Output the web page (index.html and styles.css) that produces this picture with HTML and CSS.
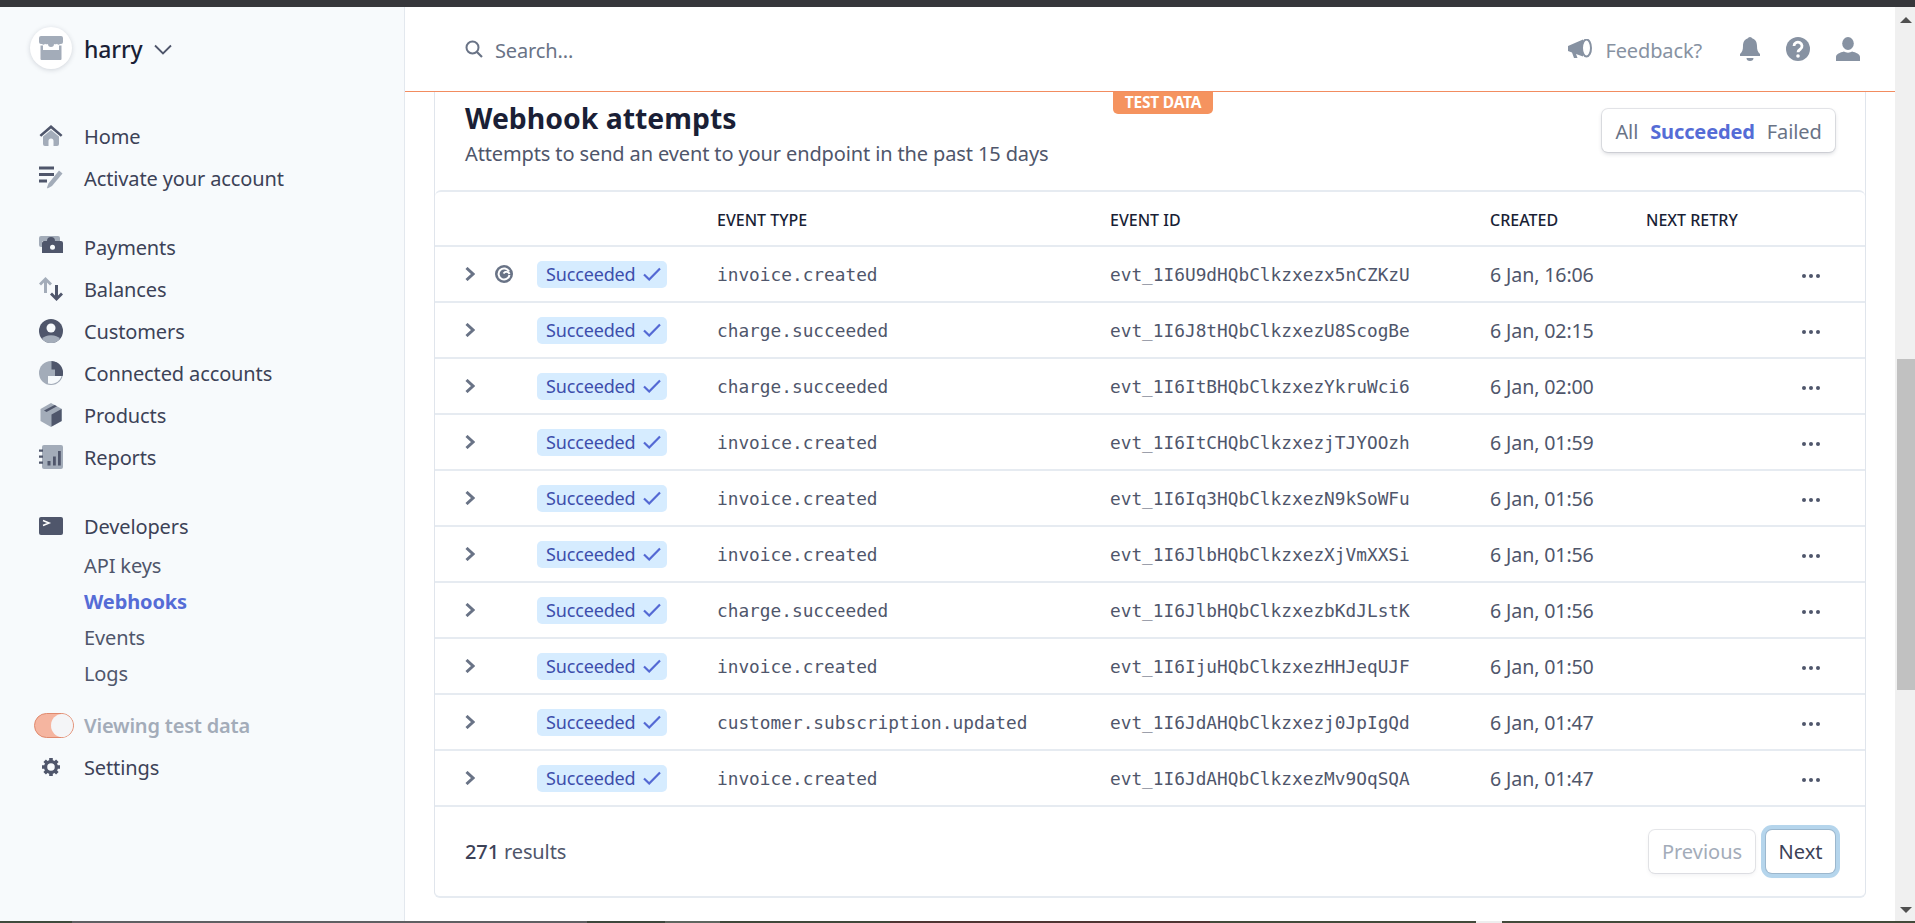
FILE: index.html
```html
<!DOCTYPE html>
<html lang="en">
<head>
  <meta charset="UTF-8" />
  <title>Webhook attempts</title>
  <link rel="stylesheet" href="styles.css">
</head>
<body>

  <svg class="defs" aria-hidden="true">
    <symbol id="chev" viewBox="0 0 10 14"><path d="M1.5 1 8 7 1.5 13" fill="none" stroke="#697386" stroke-width="3"/></symbol>
    <symbol id="tick" viewBox="0 0 18 14"><path d="M1 7.5 6.2 12.5 17 1.5" fill="none" stroke="#5469d4" stroke-width="2.2"/></symbol>
    <symbol id="dots" viewBox="0 0 18 4"><circle cx="2" cy="2" r="2" fill="#4f566b"/><circle cx="9" cy="2" r="2" fill="#4f566b"/><circle cx="16" cy="2" r="2" fill="#4f566b"/></symbol>
  </svg>

  <div class="top-strip"></div>

  <div class="window">
    <aside class="sidebar">
      <div class="account">
        <div class="avatar">
          <svg width="24" height="24" viewBox="0 0 24 24"><path d="M2 0h20a2 2 0 0 1 2 2v4a2 2 0 0 1-2 2h-1a2 2 0 0 1-3-.2 3 3 0 0 1-3 .2 3 3 0 0 1-6 0 3 3 0 0 1-3-.2 2 2 0 0 1-3 .2H2a2 2 0 0 1-2-2V2a2 2 0 0 1 2-2z" fill="#a3acb9"/><path d="M1.5 9.5H4V14h16V9.5h2.5V23a1 1 0 0 1-1 1h-19a1 1 0 0 1-1-1z" fill="#a3acb9"/></svg>
        </div>
        <span class="account-name">harry</span>
        <svg class="account-chev" width="18" height="11" viewBox="0 0 18 11"><path d="M1 1.5 9 9.500 17 1.5" fill="none" stroke="#4f566b" stroke-width="1.8"/></svg>
      </div>

      <nav class="nav-group">
        <a class="nav-item">
          <svg width="24" height="24" viewBox="0 0 24 24"><path d="M12 6 20 12.500V20a2 2 0 0 1-2 2h-3.500v-5a2.500 2.500 0 0 0-5 0v5H6a2 2 0 0 1-2-2v-7.500z" fill="#a3acb9"/><path d="M12 1 23.500 11l-1.700 1.800L12 4.500 2.200 12.800.5 11z" fill="#4f566b"/></svg>
          Home
        </a>
        <a class="nav-item">
          <svg width="24" height="24" viewBox="0 0 24 24"><path d="M0 .5h15v3H0zM0 7h15v3H0zM0 13.500h8v3H0z" fill="#4f566b"/><path d="M20 4.500l3.500 3L13 20l-4.500 2.500-.5-1 1.500-4z" fill="#a3acb9"/></svg>
          Activate your account
        </a>
      </nav>

      <nav class="nav-group">
        <a class="nav-item">
          <svg width="24" height="24" viewBox="0 0 24 24"><path d="M0 3a2 2 0 0 1 2-2h17a2 2 0 0 1 2 2v3H3v6H2a2 2 0 0 1-2-2z" fill="#a3acb9"/><path d="M5 6h3a4 4 0 0 1 8 0h6a2 2 0 0 1 2 2v10H3V8a2 2 0 0 1 2-2z" fill="#4f566b"/><circle cx="13.500" cy="12.300" r="2.500" fill="#f7fafc"/></svg>
          Payments
        </a>
        <a class="nav-item">
          <svg width="24" height="24" viewBox="0 0 24 24"><path d="M6.500 0 13 6.500l-2 2-3-3V16H5V5.500l-3 3-2-2z" fill="#a3acb9"/><path d="M17.500 24 11 17.500l2-2 3 3V8h3v10.500l3-3 2 2z" fill="#4f566b"/></svg>
          Balances
        </a>
        <a class="nav-item">
          <svg width="24" height="24" viewBox="0 0 24 24"><circle cx="12" cy="12" r="12" fill="#4f566b"/><circle cx="12" cy="9" r="4.500" fill="#f7fafc"/><path d="M3 20a10 6.500 0 0 1 18 0 12 12 0 0 1-18 0z" fill="#a3acb9"/></svg>
          Customers
        </a>
        <a class="nav-item">
          <svg width="24" height="24" viewBox="0 0 24 24"><circle cx="12" cy="12" r="12" fill="#a3acb9"/><path d="M9 15h13.500A10.800 10.800 0 0 1 9 22.500z" fill="#f7fafc"/><path d="M12.500 0A12 12 0 0 1 23.700 15H16V8.500h-3.500z" fill="#4f566b"/></svg>
          Connected accounts
        </a>
        <a class="nav-item">
          <svg width="24" height="24" viewBox="0 0 24 24"><path d="M12 0 23 6v12l-11 6-10.500-6V6z" fill="#a3acb9"/><path d="M12.500 11.500 22.500 6v12l-10 5.500z" fill="#4f566b"/><path d="M5 7.500 15.500 2 18 3.300 7.500 9z" fill="#4f566b"/></svg>
          Products
        </a>
        <a class="nav-item">
          <svg width="24" height="24" viewBox="0 0 24 24"><rect x="3" y="0" width="21" height="24" rx="2" fill="#a3acb9"/><path d="M8.500 16h3v4.500h-3zM14 11.500h2.800v9H14zM19 6h2.800v14.500H19z" fill="#4f566b"/><path d="M0 4.500h4v2.200H0zM0 10.500h4v2.200H0zM0 16.500h4v2.200H0z" fill="#4f566b"/></svg>
          Reports
        </a>
      </nav>

      <nav class="nav-group">
        <a class="nav-item">
          <svg width="24" height="24" viewBox="0 0 24 24"><rect x="0" y="3" width="24" height="18" rx="2" fill="#4f566b"/><path d="M4 6.500 10 9 4 11.500" fill="none" stroke="#fff" stroke-width="1.6"/></svg>
          Developers
        </a>
        <a class="nav-sub">API keys</a>
        <a class="nav-sub active">Webhooks</a>
        <a class="nav-sub">Events</a>
        <a class="nav-sub">Logs</a>
      </nav>

      <nav class="nav-group nav-bottom">
        <a class="nav-item test-toggle">
          <span class="switch"><span class="knob"></span></span>
          Viewing test data
        </a>
        <a class="nav-item">
          <svg width="24" height="24" viewBox="-2 -2 28 28"><g stroke="#4f566b" stroke-width="4.2"><path d="M12 1.500v21M1.500 12h21M4.600 4.600l14.800 14.800M19.400 4.600 4.600 19.400"/></g><circle cx="12" cy="12" r="6.300" fill="#f7fafc" stroke="#4f566b" stroke-width="3.800"/></svg>
          Settings
        </a>
      </nav>
    </aside>

    <div class="main">
      <header class="topbar">
        <div class="search">
          <svg width="18" height="18" viewBox="0 0 18 18"><circle cx="7.500" cy="7.500" r="6" fill="none" stroke="#697386" stroke-width="2"/><path d="M12 12l5 5" stroke="#697386" stroke-width="2.200"/></svg>
          <span>Search...</span>
        </div>
        <div class="top-actions">
          <div class="feedback">
            <svg width="24" height="20" viewBox="0 0 24 20"><path d="M0 7l15-6.500v17L8 15l1.500 4H6l-2-5.500L0 12z" fill="#8792a2"/><ellipse cx="18.500" cy="9" rx="4.500" ry="8.500" fill="none" stroke="#8792a2" stroke-width="2"/></svg>
            <span>Feedback?</span>
          </div>
          <svg class="top-icon" width="20" height="24" viewBox="0 0 20 24"><path d="M10 0a3 3 0 0 1 2.500 1.500C16 2.500 17 6 17 9c0 4 .8 6 3 8v2H0v-2c2.200-2 3-4 3-8 0-3 1-6.500 4.500-7.500A3 3 0 0 1 10 0zM6.500 21h7a3.500 3 0 0 1-7 0z" fill="#8792a2"/></svg>
          <svg class="top-icon" width="24" height="24" viewBox="0 0 24 24"><circle cx="12" cy="12" r="12" fill="#8792a2"/><path d="M8 9a4 3.800 0 1 1 6.500 3c-1.800 1.200-2.500 1.700-2.500 3.200" fill="none" stroke="#fff" stroke-width="2.800"/><circle cx="12" cy="19" r="1.800" fill="#fff"/></svg>
          <svg class="top-icon" width="24" height="24" viewBox="0 0 24 24"><ellipse cx="12" cy="6.500" rx="5.800" ry="6.500" fill="#8792a2"/><path d="M0 24v-4c0-3 4-4.500 8-5.500 2 1.500 6 1.500 8 0 4 1 8 2.500 8 5.500v4z" fill="#8792a2"/></svg>
        </div>
      </header>

      <div class="test-tab">TEST DATA</div>

      <section class="panel">
        <div class="panel-head">
          <div>
            <h2>Webhook attempts</h2>
            <p>Attempts to send an event to your endpoint in the past 15 days</p>
          </div>
          <div class="filter">
            <span>All</span>
            <span class="active">Succeeded</span>
            <span>Failed</span>
          </div>
        </div>

        <div class="table-wrap">
          <table class="attempts">
            <colgroup>
              <col class="c-chev"><col class="c-retry"><col class="c-status"><col class="c-type"><col class="c-id"><col class="c-created"><col class="c-next"><col>
            </colgroup>
            <thead>
              <tr><th></th><th></th><th></th><th>EVENT TYPE</th><th>EVENT ID</th><th>CREATED</th><th>NEXT RETRY</th><th></th></tr>
            </thead>
            <tbody>
              <tr>
                <td><svg class="chev"><use href="#chev"/></svg></td>
                <td><svg class="retry" viewBox="0 0 18 18"><circle cx="9" cy="9" r="9" fill="#697386"/><path d="M14 6.500A5.500 5.500 0 1 0 14.500 10" fill="none" stroke="#fff" stroke-width="2"/><path d="M8.500 8.500c2-2.500 5-2 6 .5" fill="none" stroke="#fff" stroke-width="2"/></svg></td>
                <td><span class="badge">Succeeded <svg class="tick"><use href="#tick"/></svg></span></td>
                <td class="mono">invoice.created</td>
                <td class="mono">evt_1I6U9dHQbClkzxezx5nCZKzU</td>
                <td>6 Jan, 16:06</td><td></td>
                <td><svg class="dots"><use href="#dots"/></svg></td>
              </tr>
              <tr>
                <td><svg class="chev"><use href="#chev"/></svg></td><td></td>
                <td><span class="badge">Succeeded <svg class="tick"><use href="#tick"/></svg></span></td>
                <td class="mono">charge.succeeded</td>
                <td class="mono">evt_1I6J8tHQbClkzxezU8ScogBe</td>
                <td>6 Jan, 02:15</td><td></td>
                <td><svg class="dots"><use href="#dots"/></svg></td>
              </tr>
              <tr>
                <td><svg class="chev"><use href="#chev"/></svg></td><td></td>
                <td><span class="badge">Succeeded <svg class="tick"><use href="#tick"/></svg></span></td>
                <td class="mono">charge.succeeded</td>
                <td class="mono">evt_1I6ItBHQbClkzxezYkruWci6</td>
                <td>6 Jan, 02:00</td><td></td>
                <td><svg class="dots"><use href="#dots"/></svg></td>
              </tr>
              <tr>
                <td><svg class="chev"><use href="#chev"/></svg></td><td></td>
                <td><span class="badge">Succeeded <svg class="tick"><use href="#tick"/></svg></span></td>
                <td class="mono">invoice.created</td>
                <td class="mono">evt_1I6ItCHQbClkzxezjTJYOOzh</td>
                <td>6 Jan, 01:59</td><td></td>
                <td><svg class="dots"><use href="#dots"/></svg></td>
              </tr>
              <tr>
                <td><svg class="chev"><use href="#chev"/></svg></td><td></td>
                <td><span class="badge">Succeeded <svg class="tick"><use href="#tick"/></svg></span></td>
                <td class="mono">invoice.created</td>
                <td class="mono">evt_1I6Iq3HQbClkzxezN9kSoWFu</td>
                <td>6 Jan, 01:56</td><td></td>
                <td><svg class="dots"><use href="#dots"/></svg></td>
              </tr>
              <tr>
                <td><svg class="chev"><use href="#chev"/></svg></td><td></td>
                <td><span class="badge">Succeeded <svg class="tick"><use href="#tick"/></svg></span></td>
                <td class="mono">invoice.created</td>
                <td class="mono">evt_1I6JlbHQbClkzxezXjVmXXSi</td>
                <td>6 Jan, 01:56</td><td></td>
                <td><svg class="dots"><use href="#dots"/></svg></td>
              </tr>
              <tr>
                <td><svg class="chev"><use href="#chev"/></svg></td><td></td>
                <td><span class="badge">Succeeded <svg class="tick"><use href="#tick"/></svg></span></td>
                <td class="mono">charge.succeeded</td>
                <td class="mono">evt_1I6JlbHQbClkzxezbKdJLstK</td>
                <td>6 Jan, 01:56</td><td></td>
                <td><svg class="dots"><use href="#dots"/></svg></td>
              </tr>
              <tr>
                <td><svg class="chev"><use href="#chev"/></svg></td><td></td>
                <td><span class="badge">Succeeded <svg class="tick"><use href="#tick"/></svg></span></td>
                <td class="mono">invoice.created</td>
                <td class="mono">evt_1I6IjuHQbClkzxezHHJeqUJF</td>
                <td>6 Jan, 01:50</td><td></td>
                <td><svg class="dots"><use href="#dots"/></svg></td>
              </tr>
              <tr>
                <td><svg class="chev"><use href="#chev"/></svg></td><td></td>
                <td><span class="badge">Succeeded <svg class="tick"><use href="#tick"/></svg></span></td>
                <td class="mono">customer.subscription.updated</td>
                <td class="mono">evt_1I6JdAHQbClkzxezj0JpIgQd</td>
                <td>6 Jan, 01:47</td><td></td>
                <td><svg class="dots"><use href="#dots"/></svg></td>
              </tr>
              <tr>
                <td><svg class="chev"><use href="#chev"/></svg></td><td></td>
                <td><span class="badge">Succeeded <svg class="tick"><use href="#tick"/></svg></span></td>
                <td class="mono">invoice.created</td>
                <td class="mono">evt_1I6JdAHQbClkzxezMv9OqSQA</td>
                <td>6 Jan, 01:47</td><td></td>
                <td><svg class="dots"><use href="#dots"/></svg></td>
              </tr>
            </tbody>
          </table>

          <div class="table-foot">
            <div class="count"><b>271</b> results</div>
            <div class="pager">
              <button class="btn" disabled>Previous</button>
              <button class="btn focus">Next</button>
            </div>
          </div>
        </div>
      </section>
    </div>

    <div class="scrollbar">
      <span class="arrow up"></span>
      <div class="thumb"></div>
      <span class="arrow down"></span>
    </div>
  </div>

  <div class="bottom-strip"></div>

</body>
</html>
```

FILE: styles.css
```css
* {margin: 0; padding: 0; box-sizing: border-box;}
html, body {height: 923px; overflow: hidden;}
body {
  font-family: "Noto Sans", sans-serif;
  font-size: 20px;
  letter-spacing: -0.125px;
  color: #4f566b;
  background: #fff;
  display: flex;
  flex-direction: column;
}

.defs {width: 0; height: 0; position: absolute;}

.top-strip {height: 7px; background: #36373b; flex: none;}
.bottom-strip {
  height: 2px;
  flex: none;
  background: linear-gradient(to right,
    #3f4a3c 0 72px, #5f5f62 72px 587px, #3e473c 587px 665px, #5f665f 665px 720px,
    #40483a 720px 890px, #4f3432 890px 1210px, #434a3a 1210px 1476px,
    #eee 1476px 1502px, #434a3a 1502px);
}

.window {flex: 1; display: flex; min-height: 0;}

/* sidebar */
.sidebar {
  width: 405px;
  flex: none;
  background: #f7fafc;
  border-right: 1px solid #e3e8ee;
  padding: 20px 0 0 39px;
}

.account {
  display: flex;
  align-items: center;
  height: 42px;
  margin-left: -9px;
  margin-bottom: 46px;
}
.avatar {
  width: 42px;
  height: 42px;
  border-radius: 50%;
  background: #fff;
  box-shadow: 0 1px 5px rgba(60,66,87,0.2);
  display: flex;
  align-items: center;
  justify-content: center;
}
.account-name {
  margin-left: 12px;
  margin-top: 2px;
  font-size: 23px;
  font-weight: 500;
  color: #1a1f36;
}
.account-chev {margin-left: 11px; margin-top: 3px;}

.nav-group {margin-bottom: 27px;}
.nav-bottom {margin-top: -14px;}

.nav-item {
  display: flex;
  align-items: center;
  gap: 21px;
  height: 42px;
  color: #3c4257;
}
.nav-item svg {flex: none;}
.nav-sub {
  display: flex;
  align-items: center;
  height: 36px;
  padding-left: 45px;
  color: #4f566b;
}
.nav-sub.active {color: #556cd6; font-weight: 700;}

.test-toggle {color: #a3acb9; font-weight: 600; gap: 10px; margin-left: -5px; letter-spacing: -0.2px;}
.switch {
  width: 40px;
  height: 25px;
  border-radius: 13px;
  background: #f5b5a0;
  border: 1px solid #e08a6e;
  display: flex;
  justify-content: flex-end;
  align-items: center;
  flex: none;
}
.knob {
  width: 22px;
  height: 23px;
  border-radius: 50%;
  background: #f4f5f7;
}

/* main column */
.main {flex: 1; min-width: 0; position: relative;}

.topbar {
  height: 85px;
  border-bottom: 1px solid #f28c60;
  display: flex;
  align-items: center;
  justify-content: space-between;
  padding: 0 35px 0 60px;
}
.search {display: flex; align-items: center; gap: 12px; color: #697386;}
.search span, .feedback span {margin-top: 2px;}
.top-actions {display: flex; align-items: center;}
.feedback {display: flex; align-items: center; gap: 13px; color: #8792a2; margin-right: 38px;}
.top-icon {margin-left: 26px;}
.top-icon:first-of-type {margin-left: 0;}

.test-tab {
  position: absolute;
  top: 85px;
  left: 708px;
  width: 100px;
  height: 22px;
  background: #f5935f;
  color: #fff;
  font-size: 15.5px;
  font-weight: 700;
  letter-spacing: -0.2px;
  line-height: 21px;
  text-align: center;
  border-radius: 0 0 5px 5px;
}

.panel {
  margin-left: 29px;
  width: 1432px;
  border-left: 1px solid #e0e5ec;
  border-right: 1px solid #e0e5ec;
  border-bottom: 2px solid #e6ebf1;
  border-radius: 0 0 6px 6px;
}

.panel-head {
  height: 98px;
  display: flex;
  justify-content: space-between;
  align-items: flex-start;
  padding: 8px 30px 0;
}
.panel-head h2 {
  font-size: 28.4px;
  line-height: 36px;
  font-weight: 700;
  color: #1a1f36;
  letter-spacing: 0;
}
.panel-head p {line-height: 30px; margin-top: 3px;}

.filter {
  margin-top: 9px;
  width: 233px;
  height: 43px;
  display: flex;
  align-items: center;
  justify-content: center;
  gap: 12px;
  padding-top: 2px;
  background: #fff;
  border-radius: 6px;
  box-shadow: 0 0 0 1px rgba(60,66,87,0.12), 0 2px 4px rgba(60,66,87,0.2);
  color: #697386;
}
.filter .active {color: #556cd6; font-weight: 700;}

.table-wrap {border-top: 2px solid #e6ebf1; border-radius: 6px 6px 0 0;}

.attempts {width: 100%; border-collapse: collapse; table-layout: fixed;}
.c-chev {width: 60px;}
.c-retry {width: 42px;}
.c-status {width: 180px;}
.c-type {width: 393px;}
.c-id {width: 380px;}
.c-created {width: 156px;}
.c-next {width: 156px;}

.attempts th {
  height: 54px;
  padding-top: 2px;
  text-align: left;
  font-size: 16px;
  font-weight: 500;
  color: #1a1f36;
  letter-spacing: 0;
  border-bottom: 2px solid #e6ebf1;
}
.attempts td {
  height: 56px;
  border-bottom: 2px solid #e6ebf1;
  vertical-align: middle;
  white-space: nowrap;
  font-size: 19.6px;
}
.attempts td:first-child {padding-left: 30px;}
.attempts .mono {
  font-family: "DejaVu Sans Mono", monospace;
  font-size: 17.8px;
  letter-spacing: 0;
}

.chev {width: 10px; height: 14px; display: block;}
.retry {width: 18px; height: 18px; display: block;}
.dots {width: 18px; height: 4px; display: block; margin-top: 3px;}

.badge {
  display: inline-flex;
  align-items: center;
  gap: 7px;
  height: 27px;
  width: 130px;
  padding-left: 9px;
  border-radius: 5px;
  background: #d6ecff;
  color: #3d4eac;
  font-size: 18px;
  letter-spacing: -0.15px;
}
.tick {width: 18px; height: 14px; flex: none;}

.table-foot {
  height: 89px;
  display: flex;
  align-items: center;
  justify-content: space-between;
  padding: 0 30px;
}
.count b {font-weight: 500; color: #3c4257;}
.pager {display: flex; gap: 11px;}

.btn {
  height: 43px;
  padding: 0 12px;
  border: none;
  border-radius: 6px;
  background: #fff;
  font: inherit;
  color: #3c4257;
  box-shadow: 0 0 0 1px rgba(60,66,87,0.12), 0 2px 4px rgba(60,66,87,0.08);
}
.btn[disabled] {color: #a3acb9; width: 106px;}
.btn.focus {width: 69px; box-shadow: 0 0 0 1px rgba(60,66,87,0.2), 0 0 0 5px #b5d5ec, 0 2px 4px rgba(60,66,87,0.2);}

/* fake browser scrollbar */
.scrollbar {
  width: 20px;
  flex: none;
  background: #f0f0f0;
  display: flex;
  flex-direction: column;
  align-items: flex-end;
}
.arrow {
  width: 0;
  height: 0;
  border-left: 6px solid transparent;
  border-right: 6px solid transparent;
  align-self: center;
  margin-left: 2px;
}
.arrow.up {border-bottom: 6px solid #505050; margin-top: 10px;}
.arrow.down {border-top: 6px solid #505050; margin-top: auto; margin-bottom: 8px;}
.thumb {width: 18px; height: 331px; background: #c1c1c1; margin-top: 336px;}
```
